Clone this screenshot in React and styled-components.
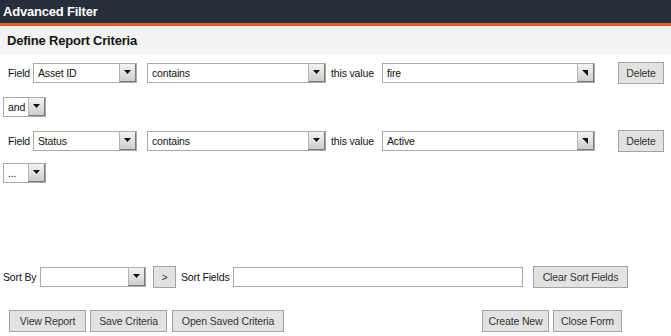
import React from "react";
import styled, { createGlobalStyle } from "styled-components";

const GlobalStyle = createGlobalStyle`
  body {
    margin: 0;
    background: #ffffff;
    font-family: "Liberation Sans", Arial, sans-serif;
    font-size: 10.5px;
    letter-spacing: -0.15px;
    color: #111;
  }
`;

const Page = styled.div`
  width: 671px;
  height: 336px;
  overflow: hidden;
`;

const TitleBar = styled.div`
  height: 23px;
  line-height: 24px;
  padding-left: 3px;
  background: #262d3b;
  color: #fff;
  font-weight: 700;
  font-size: 13px;
  letter-spacing: -0.2px;
  border-bottom: 3px solid #f0581f;
`;

const SectionHeader = styled.div`
  height: 28px;
  display: flex;
  align-items: center;
  padding-left: 7px;
  background: #f3f3f3;
  font-weight: 700;
  font-size: 13px;
  letter-spacing: -0.2px;
  color: #151515;
`;

const Row = styled.div`
  display: flex;
  align-items: center;
  height: 22px;
  margin-top: ${(p) => p.$top || 0}px;
  padding-left: ${(p) => p.$left || 0}px;
`;

const Label = styled.span`
  flex-shrink: 0;
  width: ${(p) => p.$w}px;
  white-space: nowrap;
`;

const SelectBox = styled.div`
  flex-shrink: 0;
  display: flex;
  width: ${(p) => p.$w}px;
  height: 20px;
  box-sizing: border-box;
  border: 1px solid #a9a9a9;
  background: #fff;
  margin-right: ${(p) => p.$gap || 0}px;
`;

const SelectText = styled.div`
  flex: 1;
  padding-left: 4px;
  line-height: 18px;
  overflow: hidden;
  white-space: nowrap;
`;

const ArrowBox = styled.div`
  width: 17px;
  display: flex;
  align-items: center;
  justify-content: center;
  box-sizing: border-box;
  border-left: 1px solid #b5b5b5;
  border-right: 1px solid #7a7a7a;
  border-bottom: 1px solid #7a7a7a;
  background: linear-gradient(#f4f4f4, #cdcdcd);
`;

const Button = styled.button`
  flex-shrink: 0;
  height: 22px;
  width: ${(p) => p.$w}px;
  padding: 0;
  margin-right: ${(p) => p.$gap || 0}px;
  box-sizing: border-box;
  border: 1px solid #a3a3a3;
  background: #e2e2e2;
  font-family: "Liberation Sans", Arial, sans-serif;
  font-size: 10.5px;
  letter-spacing: -0.15px;
  color: #333;
`;

const TextInput = styled.div`
  flex-shrink: 0;
  width: ${(p) => p.$w}px;
  height: 20px;
  box-sizing: border-box;
  border: 1px solid #a9a9a9;
  background: #fff;
  margin-right: ${(p) => p.$gap || 0}px;
`;

const Footer = styled.div`
  display: flex;
  align-items: center;
  margin-top: 22px;
  padding: 0 49px 0 9px;
`;

const Spacer = styled.div`
  flex: 1;
`;

const DownArrow = () => (
  <svg width="8" height="5" viewBox="0 0 8 5">
    <polygon points="0,0 7,0 3.5,4" fill="#111" />
  </svg>
);

const CornerArrow = () => (
  <svg width="7" height="7" viewBox="0 0 7 7">
    <polygon points="0,1 6,1 6,7" fill="#111" />
  </svg>
);

const Select = ({ w, value, gap, arrow }) => (
  <SelectBox $w={w} $gap={gap}>
    <SelectText>{value}</SelectText>
    <ArrowBox>{arrow === "corner" ? <CornerArrow /> : <DownArrow />}</ArrowBox>
  </SelectBox>
);

const Criterion = ({ field, value, top }) => (
  <Row $top={top} $left={8}>
    <Label $w={25}>Field</Label>
    <Select w={104} value={field} gap={10} />
    <Select w={179} value="contains" gap={5} />
    <Label $w={51}>this value</Label>
    <Select w={213} value={value} gap={23} arrow="corner" />
    <Button $w={46}>Delete</Button>
  </Row>
);

export default function App() {
  return (
    <Page>
      <GlobalStyle />
      <TitleBar>Advanced Filter</TitleBar>
      <SectionHeader>Define Report Criteria</SectionHeader>
      <Criterion field="Asset ID" value="fire" top={8} />
      <Row $top={12} $left={3}>
        <Select w={43} value="and" />
      </Row>
      <Criterion field="Status" value="Active" top={12} />
      <Row $top={10} $left={3}>
        <Select w={43} value="..." />
      </Row>
      <Row $top={82} $left={3}>
        <Label $w={37}>Sort By</Label>
        <Select w={106} gap={7} />
        <Button $w={23} $gap={5}>&gt;</Button>
        <Label $w={52}>Sort Fields</Label>
        <TextInput $w={290} $gap={10} />
        <Button $w={95}>Clear Sort Fields</Button>
      </Row>
      <Footer>
        <Button $w={77} $gap={4}>View Report</Button>
        <Button $w={77} $gap={5}>Save Criteria</Button>
        <Button $w={112}>Open Saved Criteria</Button>
        <Spacer />
        <Button $w={67} $gap={4}>Create New</Button>
        <Button $w={69}>Close Form</Button>
      </Footer>
    </Page>
  );
}
